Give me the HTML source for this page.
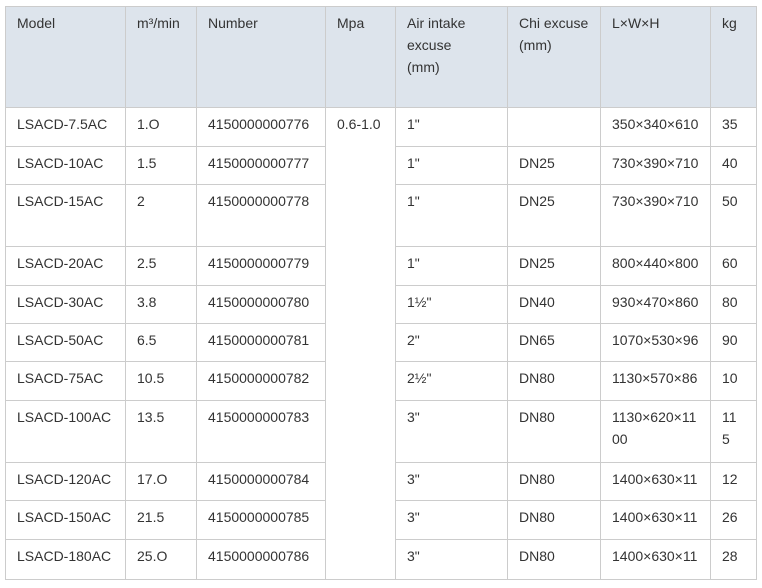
<!DOCTYPE html>
<html><head><meta charset="utf-8"><style>
body{margin:0;background:#fff;font-family:"Liberation Sans",sans-serif;}
table{position:absolute;left:5px;top:6px;border-collapse:collapse;table-layout:fixed;width:751px;color:#333;font-size:14px;}
td,th{border:1px solid #ccc;vertical-align:top;text-align:left;font-weight:normal;padding:5px 0 0 11px;line-height:22px;white-space:nowrap;overflow:hidden}
th{background:#dde4ec;}
</style></head><body>
<table>
<colgroup><col style="width:120px"><col style="width:71px"><col style="width:129px"><col style="width:70px"><col style="width:112px"><col style="width:93px"><col style="width:110px"><col style="width:46px"></colgroup>
<tr style="height:101px"><th>Model</th><th>m³/min</th><th>Number</th><th>Mpa</th><th>Air intake<br>excuse<br>(mm)</th><th>Chi excuse<br>(mm)</th><th>L×W×H</th><th>kg</th></tr>
<tr style="height:39px"><td>LSACD-7.5AC</td><td>1.O</td><td>4150000000776</td><td rowspan="11">0.6-1.0</td><td>1"</td><td></td><td>350×340×610</td><td>35</td></tr>
<tr style="height:38px"><td>LSACD-10AC</td><td>1.5</td><td>4150000000777</td><td>1"</td><td>DN25</td><td>730×390×710</td><td>40</td></tr>
<tr style="height:62px"><td>LSACD-15AC</td><td>2</td><td>4150000000778</td><td>1"</td><td>DN25</td><td>730×390×710</td><td>50</td></tr>
<tr style="height:39px"><td>LSACD-20AC</td><td>2.5</td><td>4150000000779</td><td>1"</td><td>DN25</td><td>800×440×800</td><td>60</td></tr>
<tr style="height:38px"><td>LSACD-30AC</td><td>3.8</td><td>4150000000780</td><td>1½"</td><td>DN40</td><td>930×470×860</td><td>80</td></tr>
<tr style="height:38px"><td>LSACD-50AC</td><td>6.5</td><td>4150000000781</td><td>2"</td><td>DN65</td><td>1070×530×96</td><td>90</td></tr>
<tr style="height:39px"><td>LSACD-75AC</td><td>10.5</td><td>4150000000782</td><td>2½"</td><td>DN80</td><td>1130×570×86</td><td>10</td></tr>
<tr style="height:62px"><td>LSACD-100AC</td><td>13.5</td><td>4150000000783</td><td>3"</td><td>DN80</td><td>1130×620×11<br>00</td><td>11<br>5</td></tr>
<tr style="height:38px"><td>LSACD-120AC</td><td>17.O</td><td>4150000000784</td><td>3"</td><td>DN80</td><td>1400×630×11</td><td>12</td></tr>
<tr style="height:39px"><td>LSACD-150AC</td><td>21.5</td><td>4150000000785</td><td>3"</td><td>DN80</td><td>1400×630×11</td><td>26</td></tr>
<tr style="height:40px"><td>LSACD-180AC</td><td>25.O</td><td>4150000000786</td><td>3"</td><td>DN80</td><td>1400×630×11</td><td>28</td></tr>
</table>
</body></html>
